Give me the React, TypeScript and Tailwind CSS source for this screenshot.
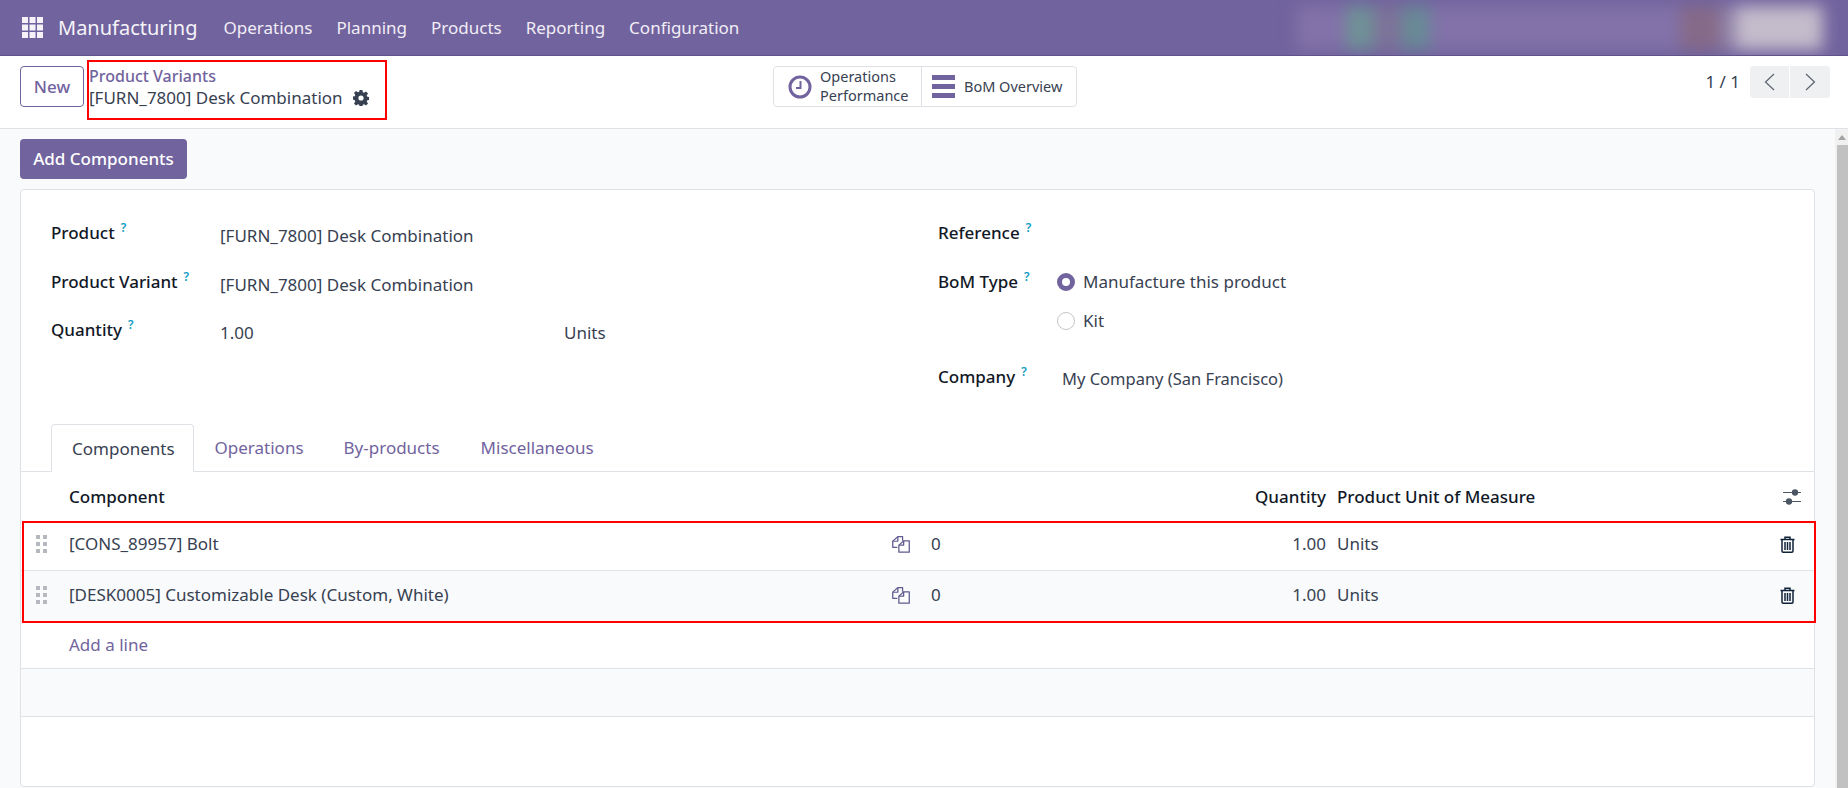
import React from "react";

const Help = () => <sup className="ml-[6px] text-[12px] font-semibold text-[#0d9cc4] relative -top-[7px]">?</sup>;

const Label = ({ children }: { children: React.ReactNode }) => (
  <span className="font-medium text-[17px] text-[#111827] whitespace-nowrap">{children}<Help /></span>
);

const CopyIcon = () => (
  <svg width="18" height="17" viewBox="1 0.5 17 18" fill="none" stroke="#5f5a8e" strokeWidth="1.2" strokeLinejoin="round" preserveAspectRatio="none">
    <path d="M6 12.5H1.7V6L6.5 1.2H11V5.5" />
    <path d="M1.7 6H6.5V1.2" />
    <path d="M7.5 17.6V10.2L12 5.6H17.3V17.6Z" fill="white" />
    <path d="M7.5 10.2H12V5.6" />
  </svg>
);

const TrashIcon = () => (
  <svg width="15" height="17" viewBox="0 0 15 17" fill="none" stroke="#0f2238" strokeWidth="1.5">
    <path d="M0.5 3.5H14.5" />
    <path d="M5 3.5V1.2H10V3.5" />
    <path d="M2 3.5V15a1.2 1.2 0 0 0 1.2 1.2H11.8A1.2 1.2 0 0 0 13 15V3.5" />
    <path d="M5 6V14M7.5 6V14M10 6V14" />
  </svg>
);

const Drag = () => (
  <span className="grid grid-cols-2 gap-x-[3px] gap-y-[3px] w-[11px]">
    {[0, 1, 2, 3, 4, 5].map((i) => <span key={i} className="w-[4px] h-[4px] bg-[#b5b9bf]" />)}
  </span>
);

const Row = ({ name, cls }: { name: string; cls: string }) => (
  <div className={`flex items-center border-b border-[#e2e4e8] ${cls}`}>
    <div className="w-[48px] pl-[15px] flex shrink-0"><Drag /></div>
    <div className="w-[823px] shrink-0 text-[#374151]">{name}</div>
    <div className="w-[39px] shrink-0"><CopyIcon /></div>
    <div className="w-[40px] shrink-0 text-[#374151]">0</div>
    <div className="w-[355px] shrink-0 text-right text-[#374151]">1.00</div>
    <div className="flex-1 pl-[11px] text-[#374151]">Units</div>
    <div className="w-[34px] shrink-0"><TrashIcon /></div>
  </div>
);

export default function App() {
  return (
    <div className="relative h-[788px] w-[1848px] overflow-hidden flex flex-col bg-white text-[17px] font-['Noto_Sans',sans-serif] text-[#374151]">
      <header className="h-[56px] shrink-0 bg-[#71639e] border-b border-[#5f5389] flex items-center text-white overflow-hidden">
        <svg className="ml-[22px] shrink-0" width="21" height="21" viewBox="0 0 21 21" fill="#f5f3f8">
          {[0, 7.5, 15].map((y) => [0, 7.5, 15].map((x) => <rect key={`${x}-${y}`} x={x} y={y} width="6" height="6" />))}
        </svg>
        <span className="ml-[15px] text-[20px] text-[#f5f3f8]">Manufacturing</span>
        <nav className="ml-[26px] flex gap-[24px] text-[17px] text-[#f1eef6]">
          <span>Operations</span><span>Planning</span><span>Products</span><span>Reporting</span><span>Configuration</span>
        </nav>
        <div className="ml-auto w-[552px] shrink-0 flex items-center h-[44px] blur-[8px]">
          <span className="w-[50px] h-full bg-[#8272a9]" />
          <span className="w-[28px] h-full bg-[#6f9196]" />
          <span className="w-[28px] h-full bg-[#7d7299]" />
          <span className="w-[28px] h-full bg-[#688a96]" />
          <span className="w-[250px] h-full bg-[#8272a9]" />
          <span className="w-[40px] h-full bg-[#866a88]" />
          <span className="w-[16px] h-full bg-[#8f82a8]" />
          <span className="w-[87px] h-full bg-[#c4bccb]" />
        </div>
      </header>

      <div className="h-[73px] shrink-0 border-b border-[#dee2e6] bg-white flex items-start pt-[10px]">
        <button className="ml-[20px] w-[64px] h-[41px] border border-[#71639e] rounded-[4px] text-[#71639e] font-medium">New</button>
        <div className="ml-[5px] w-[684px] shrink-0 leading-[21px]">
          <div className="text-[#71639e] font-medium text-[16px]">Product Variants</div>
          <div className="flex items-center text-[#374151]">[FURN_7800] Desk Combination
            <svg className="ml-[10px]" width="16" height="16" viewBox="0 0 16 16" fill="#374151">
              <path fillRule="evenodd" d="M6.6 0h2.8l.4 2.2 1.3.6 1.9-1.3 2 2-1.3 1.9.6 1.3 2.2.4v2.8l-2.2.4-.6 1.3 1.3 1.9-2 2-1.9-1.3-1.3.6-.4 2.2H6.6l-.4-2.2-1.3-.6-1.9 1.3-2-2 1.3-1.9-.6-1.3L-.5 9.4V6.6l2.2-.4.6-1.3L1 3l2-2 1.9 1.3 1.3-.6zM8 5.4a2.6 2.6 0 1 0 0 5.2 2.6 2.6 0 0 0 0-5.2z" />
            </svg>
          </div>
        </div>
        <div className="flex h-[41px] w-[304px] border border-[#dee2e6] rounded-[4px] text-[14.5px] text-[#374151]">
          <div className="w-[148px] flex items-center border-r border-[#dee2e6] pl-[14px]">
            <svg width="24" height="24" viewBox="0 0 24 24" fill="none" stroke="#71639e" strokeWidth="3">
              <circle cx="12" cy="12" r="10" />
              <path d="M12.5 6V13H8" strokeWidth="2" />
            </svg>
            <span className="ml-[8px] leading-[19px] -mt-[2px]">Operations<br />Performance</span>
          </div>
          <div className="flex-1 flex items-center pl-[10px]">
            <span className="flex flex-col gap-[4px] w-[23px]">
              <span className="h-[5px] bg-[#71639e]" /><span className="h-[5px] bg-[#71639e]" /><span className="h-[5px] bg-[#71639e]" />
            </span>
            <span className="ml-[9px]">BoM Overview</span>
          </div>
        </div>
        <div className="ml-auto mr-[18px] flex items-center h-[32px]">
          <span className="mr-[10px] text-[17px]">1 / 1</span>
          <span className="w-[39px] h-[32px] bg-[#eff0f2] rounded-l-[4px] flex items-center justify-center">
            <svg width="11" height="18" viewBox="0 0 11 18" fill="none" stroke="#5c6470" strokeWidth="1.2"><path d="M10 1L1.5 9L10 17" /></svg>
          </span>
          <span className="ml-[1px] w-[40px] h-[32px] bg-[#eff0f2] rounded-r-[4px] flex items-center justify-center">
            <svg width="11" height="18" viewBox="0 0 11 18" fill="none" stroke="#5c6470" strokeWidth="1.2"><path d="M1 1L9.5 9L1 17" /></svg>
          </span>
        </div>
      </div>

      <div className="flex-1 flex min-h-0">
        <main className="flex-1 bg-[#f9fafb] pt-[10px] pl-[20px] pr-[20px] min-w-0">
          <button className="w-[167px] h-[40px] bg-[#71639e] rounded-[4px] text-white font-medium">Add Components</button>
          <section className="mt-[10px] h-[598px] bg-white border border-[#dee2e6] rounded-[4px]">
            <div className="flex h-[234px] pt-[30px]">
              <div className="w-[885px] pl-[30px] shrink-0">
                <div className="flex h-[49px]"><div className="w-[169px]"><Label>Product</Label></div><div className="pt-[3px]">[FURN_7800] Desk Combination</div></div>
                <div className="flex h-[48px]"><div className="w-[169px]"><Label>Product Variant</Label></div><div className="pt-[3px]">[FURN_7800] Desk Combination</div></div>
                <div className="flex h-[48px]"><div className="w-[169px]"><Label>Quantity</Label></div><div className="pt-[3px] w-[344px]">1.00</div><div className="pt-[3px]">Units</div></div>
              </div>
              <div className="flex-1 pl-[32px]">
                <div className="h-[49px]"><Label>Reference</Label></div>
                <div className="flex h-[78px]">
                  <div className="w-[119px]"><Label>BoM Type</Label></div>
                  <div className="flex flex-col gap-[17px] pt-[2px]">
                    <div className="flex items-center h-[22px]">
                      <span className="w-[18px] h-[18px] rounded-full border-[5px] border-[#71639e] bg-white" />
                      <span className="ml-[8px]">Manufacture this product</span>
                    </div>
                    <div className="flex items-center h-[22px]">
                      <span className="w-[18px] h-[18px] rounded-full border border-[#c4c6c9] bg-white" />
                      <span className="ml-[8px]">Kit</span>
                    </div>
                  </div>
                </div>
                <div className="flex mt-[17px]"><div className="w-[124px]"><Label>Company</Label></div><div className="pt-[3px] text-[16.5px]">My Company (San Francisco)</div></div>
              </div>
            </div>

            <div className="flex h-[48px] border-b border-[#dee2e6] pl-[30px] text-[#71639e]">
              <div className="h-[48px] pl-[20px] pr-[18px] bg-white border border-b-0 border-[#dee2e6] rounded-t-[4px] flex items-center text-[#374151]">Components</div>
              <div className="ml-[1px] px-[20px] flex items-center">Operations</div>
              <div className="px-[20px] flex items-center">By-products</div>
              <div className="ml-[1px] px-[20px] flex items-center">Miscellaneous</div>
            </div>

            <div className="flex items-center h-[49px] font-medium text-[#111827]">
              <div className="w-[48px] shrink-0" />
              <div className="w-[1257px] shrink-0">Component</div>
              <div className="w-[0px] shrink-0 flex justify-end"><span>Quantity</span></div>
              <div className="flex-1 pl-[11px]">Product Unit of Measure</div>
              <div className="w-[31px] shrink-0">
                <svg width="18" height="18" viewBox="0 0 18 18" fill="#4b5563" stroke="#4b5563" strokeWidth="1.1"><path d="M0 4.5H18M0 13.5H18" /><circle cx="12" cy="4.5" r="2.6" /><circle cx="6" cy="13.5" r="2.6" /></svg>
              </div>
            </div>

            <Row name="[CONS_89957] Bolt" cls="h-[50px] pb-[3px] bg-white" />
            <Row name="[DESK0005] Customizable Desk (Custom, White)" cls="h-[51px] pb-[2px] bg-[#f9fafb]" />
            <div className="h-[47px] border-b border-[#dee2e6] flex items-center pl-[48px] text-[#71639e]">Add a line</div>
            <div className="h-[48px] border-b border-[#dee2e6] bg-[#f9fafb]" />
          </section>
        </main>
        <div className="w-[13px] shrink-0 bg-[#f1f1f1] flex flex-col items-end">
          <div className="h-[15px] w-full flex items-center justify-center mt-[1px]"><span className="w-0 h-0 border-x-[4px] border-x-transparent border-b-[5px] border-b-[#a3a3a3]" /></div>
          <div className="w-[11px] flex-1 bg-[#c1c1c1]" />
        </div>
      </div>

      <div className="absolute left-[87px] top-[60px] w-[300px] h-[60px] border-2 border-[#f00]" />
      <div className="absolute left-[22px] top-[521px] w-[1794px] h-[102px] border-2 border-[#f00]" />
    </div>
  );
}
